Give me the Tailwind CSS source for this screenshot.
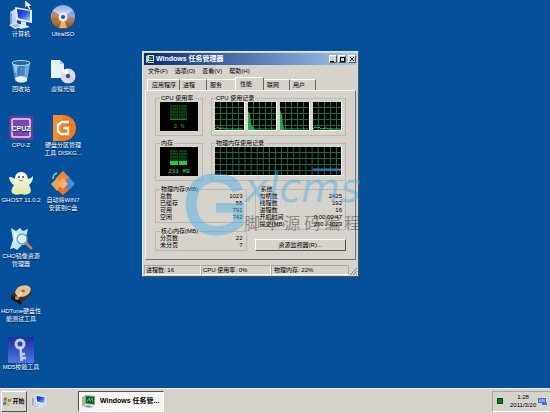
<!DOCTYPE html>
<html lang="zh-CN">
<head>
<meta charset="utf-8">
<title>Windows 任务管理器</title>
<script src="https://cdn.jsdelivr.net/npm/@tailwindcss/browser@4"></script>
</head>
<body class="h-screen flex flex-col overflow-hidden bg-[#04509b] font-['Liberation_Sans','Noto_Sans_CJK_SC',sans-serif] text-[6px] leading-[8px] text-black">

<svg class="absolute size-0" aria-hidden="true">
  <defs>
    <linearGradient id="screen" x1="0" y1="0" x2="1" y2="1"><stop offset="0" stop-color="#0b1fc0"/><stop offset=".5" stop-color="#2f55e8"/><stop offset="1" stop-color="#a9ccff"/></linearGradient>
    <linearGradient id="disc" x1="0" y1="0" x2="0" y2="1"><stop offset="0" stop-color="#8fa6de"/><stop offset=".45" stop-color="#dfe3f5"/><stop offset=".6" stop-color="#c9823c"/><stop offset="1" stop-color="#8a4a1c"/></linearGradient>
    <linearGradient id="bin" x1="0" y1="0" x2="1" y2="0"><stop offset="0" stop-color="#5f9fd0"/><stop offset=".5" stop-color="#2d6fae"/><stop offset="1" stop-color="#8cc4e6"/></linearGradient>
    <linearGradient id="key" x1="0" y1="0" x2="0" y2="1"><stop offset="0" stop-color="#1d2c9a"/><stop offset="1" stop-color="#4f78e6"/></linearGradient>
    <linearGradient id="ghost" x1="0" y1="0" x2="0" y2="1"><stop offset="0" stop-color="#ffffff"/><stop offset="1" stop-color="#dfe79a"/></linearGradient>
    <pattern id="grid" width="6" height="6" patternUnits="userSpaceOnUse"><path d="M5.500 0V6M0 5.500H6" stroke="#176b40" stroke-width="1" fill="none"/></pattern>
    <symbol id="pc" viewBox="0 0 26 26">
      <path d="M2 8l5-3 2 1v14l-5 2-2-2z" fill="#c3d3e8"/><path d="M2 8l2 1v13l-2-2z" fill="#7f9dc9"/>
      <path d="M7 3l17 3v13L8 16z" fill="#e6eefb"/><path d="M9 5l13 2v10L10 14z" fill="url(#screen)"/>
      <path d="M13 17l5 1v3l4 2-9 2-6-3 6-2z" fill="#d9e3f2"/><path d="M1 21l8-2 6 3-8 3z" fill="#eef4fd"/><path d="M3 21l6-1 4 2-6 2z" fill="#a8bddd"/>
    </symbol>
  </defs>
</svg>

<main class="relative flex-1 min-h-0">
  <nav aria-label="桌面" class="h-full w-[84px] grid grid-cols-2 grid-rows-7 grid-flow-col text-white text-center whitespace-nowrap [text-shadow:0_1px_1px_#00264f]">
    <a href="#" class="flex flex-col items-center pt-1"><svg class="size-[26px] shrink-0"><use href="#pc"/></svg>计算机</a>
    <a href="#" class="flex flex-col items-center pt-1">
      <svg class="size-[26px] shrink-0" viewBox="0 0 26 26"><path d="M4 4h18l-3 18q-6 4-12 0z" fill="url(#bin)"/><ellipse cx="13" cy="4" rx="9" ry="2.5" fill="#27659c" stroke="#b6dcf0"/><path d="M8 8l1 11M13 8v10M18 8l-1 11" stroke="#9fd0ec" stroke-opacity=".6"/><path d="M7 19q6-4 12 0v3q-6 3-11 0z" fill="#e5eef3"/><path d="M5 5l2 10 4-8z" fill="#cfe9f6" fill-opacity=".5"/></svg>回收站</a>
    <a href="#" class="flex flex-col items-center pt-1">
      <svg class="size-[26px] shrink-0" viewBox="0 0 26 26"><rect x="1" y="1" width="24" height="24" rx="2" fill="#69399f"/><rect x="4" y="4" width="18" height="18" rx="1" fill="#7a48ad" stroke="#e8dcf4" stroke-width="1.500"/><text x="13" y="16" text-anchor="middle" font-family="Liberation Sans" font-weight="bold" font-size="7" fill="#fff">CPUZ</text></svg>CPU-Z</a>
    <a href="#" class="flex flex-col items-center pt-1">
      <svg class="size-[26px] shrink-0" viewBox="0 0 26 26"><path d="M1 7q4 0 6 2 0-7 6-7t7 7q3 0 5-3 0 6-4 9 3 5 1 8-4 3-9 1-6 2-9-1-2-2 2-8-4-2-5-8z" fill="url(#ghost)"/><circle cx="11" cy="7" r="1" fill="#445"/><circle cx="15" cy="7" r="1" fill="#445"/><path d="M11 10q2 2 4 0" stroke="#778" fill="none"/></svg>GHOST 11.0.2</a>
    <a href="#" class="flex flex-col items-center pt-1">
      <svg class="size-[26px] shrink-0" viewBox="0 0 26 26"><path d="M3 2l5 3 4-3 3 3 5-2-2 8 2 7-6 1-5 5-3-2-4 1 3-9z" fill="#bfe9f5"/><path d="M6 6l4 2-3 9z" fill="#f2fcff"/><path d="M18 17l5 5" stroke="#b08365" stroke-width="3" stroke-linecap="round"/><circle cx="14" cy="13" r="5" fill="#d8f1fa" stroke="#6f9fb8" stroke-width="1.3"/></svg>CHO镜像资源<br>管理器</a>
    <a href="#" class="flex flex-col items-center pt-1">
      <svg class="size-[26px] shrink-0" viewBox="0 0 26 26"><path d="M3 14L14 4l10 4-1 5-11 11L3 18z" fill="#3a3230"/><path d="M3 14l10 6v4L3 18z" fill="#15161b"/><ellipse cx="15" cy="10" rx="8" ry="5.5" transform="rotate(-20 15 10)" fill="#e8c392"/><ellipse cx="15" cy="10" rx="2" ry="1.5" fill="#9a7347"/><path d="M9 18l5-7" stroke="#f4e6cf" stroke-width="1.5"/><circle cx="9" cy="17" r="2" fill="#b98d5d"/></svg>HDTune硬盘性<br>能测试工具</a>
    <a href="#" class="flex flex-col items-center pt-1">
      <svg class="size-[26px] shrink-0" viewBox="0 0 26 26"><rect width="26" height="26" fill="url(#key)"/><circle cx="12" cy="7" r="4" fill="none" stroke="#c4cffc" stroke-width="3"/><path d="M12.500 11l1 13M13 17h4M14 21h4" stroke="#c4cffc" stroke-width="2.500" fill="none"/></svg>MD5校验工具</a>
    <a href="#" class="flex flex-col items-center pt-1">
      <svg class="size-[26px] shrink-0" viewBox="0 0 26 26"><circle cx="13" cy="13" r="12" fill="url(#disc)"/><path d="M13 13L3 7A12 12 0 0 0 3 19z" fill="#a9642c" fill-opacity=".7"/><path d="M13 13l10-7a12 12 0 0 1 1 11z" fill="#6e7fc4" fill-opacity=".6"/><path d="M13 13l-4 11h8z" fill="#f3c795" fill-opacity=".8"/><circle cx="13" cy="13" r="4.500" fill="#e9ebf6"/><circle cx="13" cy="13" r="2" fill="#1557a0"/></svg>UltraISO</a>
    <a href="#" class="flex flex-col items-center pt-1">
      <svg class="size-[26px] shrink-0" viewBox="0 0 26 26"><path d="M1 1h9l4 4v14H1z" fill="#e4f3fd"/><path d="M10 1v4h4z" fill="#9cc6e6"/><circle cx="18" cy="17" r="7.500" fill="#d9dcee"/><path d="M18 17l-6-4a7 7 0 0 1 6-3z" fill="#fff"/><path d="M18 17l7 3a7 7 0 0 1-5 4z" fill="#e9c3dd"/><circle cx="18" cy="17" r="2.200" fill="#38517f"/></svg>虚拟光驱</a>
    <a href="#" class="flex flex-col items-center pt-1">
      <svg class="size-[26px] shrink-0" viewBox="0 0 26 26"><path d="M3 0h10a13 13 0 0 1 0 26H3z" fill="#f07a1c"/><path d="M3 0h10l-5 26H3z" fill="#f9983d" fill-opacity=".6"/><path d="M19 7h-7l-4 3v6l3 3h7v-6h-5" fill="none" stroke="#fff" stroke-width="2.300"/></svg>硬盘分区管理<br>工具 DISKG...</a>
    <a href="#" class="flex flex-col items-center pt-1">
      <svg class="size-[26px] shrink-0" viewBox="0 0 26 26"><path d="M13 1l7 7-7 6-7-6z" fill="#f08a35"/><path d="M7 8l6 6-6 7-6-7z" fill="#e9a25a"/><path d="M19 7l6 7-6 6-6-6z" fill="#3d8fd0"/><path d="M13 14l6 6-6 5-6-5z" fill="#ee6f2b"/><path d="M13 8l5 6-5 5-5-5z" fill="#f7b26a"/><path d="M3 9q0-5 4-6" stroke="#8bc6a0" stroke-width="1.500" fill="none"/></svg>自动将WIN7<br>安装到C盘</a>
  </nav>
  <svg class="absolute left-[25px] top-0 w-2 h-3" viewBox="0 0 8 12"><path d="M0 0v8l2-2 2 4 2-1-2-3h3z" fill="#fff" stroke="#222" stroke-width=".5"/></svg>

  <section aria-label="Windows 任务管理器" class="absolute left-[142px] top-[51px] w-[217px] bg-[#d6d2cc] border border-[#e9e6e0] border-r-[#55534f] border-b-[#55534f] p-px">
    <header class="h-3 flex items-center gap-px pl-px pr-px bg-linear-to-r from-[#0b2a70] to-[#a6caf0] text-white font-bold text-[7px]">
      <svg class="w-[10px] h-[10px]" viewBox="0 0 10 10"><path d="M1 2l2-1v7l-2 1z" fill="#ccc"/><path d="M3 1h6v6H3z" fill="#ddd"/><path d="M4 2h4v4H4z" fill="#0a4a20"/><path d="M4 5l1-2 1 2 2-2" stroke="#5f5" stroke-width=".6" fill="none"/><path d="M3 8h6v1H3z" fill="#eee"/></svg>
      <h1 class="flex-1">Windows 任务管理器</h1>
      <button aria-label="最小化" class="w-2 h-2 bg-[#d6d2cc] border border-white border-r-[#555] border-b-[#555] flex items-end"><span class="w-1 h-px bg-black"></span></button>
      <button aria-label="最大化" class="w-2 h-2 bg-[#d6d2cc] border border-white border-r-[#555] border-b-[#555] flex items-center justify-center"><span class="size-[5px] border border-black"></span></button>
      <button aria-label="关闭" class="w-2 h-2 ml-px bg-[#d6d2cc] border border-white border-r-[#555] border-b-[#555]"><svg viewBox="0 0 6 6"><path d="M1 1l4 4M5 1L1 5" stroke="#000"/></svg></button>
    </header>
    <nav aria-label="菜单" class="h-[12px] flex items-center gap-[7px] pl-1">
      <button>文件(F)</button><button>选项(O)</button><button>查看(V)</button><button>帮助(H)</button>
    </nav>
    <div role="tablist" class="flex items-end px-[3px] h-[13px]">
      <button role="tab" class="h-[11px] w-[33px] pl-1 text-left border-t border-l border-white border-r border-r-[#6b6965]">应用程序</button>
      <button role="tab" class="h-[11px] w-[27px] pl-[3px] text-left border-t border-t-white border-r border-r-[#6b6965]">进程</button>
      <button role="tab" class="h-[11px] w-[28px] pl-[3px] text-left border-t border-t-white">服务</button>
      <button role="tab" aria-selected="true" class="h-[13px] w-[29px] pl-1 text-left border-t border-l border-white border-r border-r-[#6b6965]">性能</button>
      <button role="tab" class="h-[11px] w-[26px] pl-[3px] text-left border-t border-t-white border-r border-r-[#6b6965]">联网</button>
      <button role="tab" class="h-[11px] w-[26px] pl-[3px] text-left border-t border-t-white border-r border-r-[#6b6965]">用户</button>
    </div>
    <div role="tabpanel" class="mx-px px-[9px] pt-[3px] pb-[8px] border border-[#f4f2ee] border-r-[#77746f] border-b-[#77746f]">
      <div class="grid grid-cols-[48px_1fr] gap-x-2 gap-y-[3px]">
        <fieldset class="border border-[#bdb9b2] px-1 pb-1 min-w-0"><legend class="px-px">CPU 使用率</legend>
          <svg class="block w-full h-[29px]" viewBox="0 0 38 29" preserveAspectRatio="none"><path d="M0 0h38v29H0z" fill="#000"/><path d="M10 3h8v15h-8zM19 3h8v15h-8z" fill="#07400f"/><path d="M10 5.500h17M10 8.500h17M10 11.500h17M10 14.500h17" stroke="#032006"/><path d="M10 17.500h17" stroke="#0c8a22"/><text x="19" y="26" text-anchor="middle" font-family="Liberation Mono" font-size="6" fill="#20b535">0 %</text></svg>
        </fieldset>
        <fieldset class="border border-[#bdb9b2] px-[3px] pb-1 min-w-0"><legend class="px-px">CPU 使用记录</legend>
          <div class="grid grid-cols-4 gap-[3px]">
            <svg class="block w-full h-[29px] border-r border-b border-white bg-black"><rect width="100%" height="100%" fill="url(#grid)"/><path d="M0 27l3-2 1 2 4-1 2 1 18 0" stroke="#2bd04a" fill="none"/></svg>
            <svg class="block w-full h-[29px] border-r border-b border-white bg-black"><rect width="100%" height="100%" fill="url(#grid)"/><path d="M0 28V9l2 3 1 10 2 3 2 3z" fill="#25a83c"/><path d="M5 27h23" stroke="#25a83c"/></svg>
            <svg class="block w-full h-[29px] border-r border-b border-white bg-black"><rect width="100%" height="100%" fill="url(#grid)"/><path d="M0 28V8l2 5 1 11 2 4z" fill="#25a83c"/><path d="M5 27h23" stroke="#25a83c"/></svg>
            <svg class="block w-full h-[29px] border-r border-b border-white bg-black"><rect width="100%" height="100%" fill="url(#grid)"/><path d="M0 27l2-2 2 1 2-1 2 2 5-1 3 1h12" stroke="#2bd04a" fill="none"/></svg>
          </div>
        </fieldset>
        <fieldset class="border border-[#bdb9b2] px-1 pb-1 min-w-0"><legend class="px-px">内存</legend>
          <svg class="block w-full h-[29px]" viewBox="0 0 38 29" preserveAspectRatio="none"><path d="M0 0h38v29H0z" fill="#000"/><path d="M10 3h8v11h-8zM19 3h8v11h-8z" fill="#07400f"/><path d="M10 5.500h17M10 8.500h17M10 11.500h17" stroke="#032006"/><path d="M10 14h8v4h-8zM19 14h8v4h-8z" fill="#1fc93a"/><text x="19" y="26" text-anchor="middle" font-family="Liberation Mono" font-weight="bold" font-size="6" fill="#20b535">231 MB</text></svg>
        </fieldset>
        <fieldset class="border border-[#bdb9b2] px-[3px] pb-1 min-w-0"><legend class="px-px">物理内存使用记录</legend>
          <svg class="block w-full h-[29px] border-r border-b border-white bg-black" viewBox="0 0 124 28" preserveAspectRatio="none"><rect width="124" height="28" fill="url(#grid)"/><path d="M96 22.500h28" stroke="#2d78d8" stroke-width="2"/></svg>
        </fieldset>
      </div>
      <div class="grid grid-cols-2 gap-2 mt-1">
        <div class="flex flex-col gap-1">
          <fieldset class="border border-[#bdb9b2] pl-1 pr-[3px] pb-px min-w-0"><legend class="px-px">物理内存(MB)</legend>
            <table class="w-full leading-[7px]"><tbody>
              <tr><th class="font-normal text-left p-0">总数</th><td class="text-right p-0">1023</td></tr>
              <tr><th class="font-normal text-left p-0">已缓存</th><td class="text-right p-0">55</td></tr>
              <tr><th class="font-normal text-left p-0">可用</th><td class="text-right p-0">791</td></tr>
              <tr><th class="font-normal text-left p-0">空闲</th><td class="text-right p-0">742</td></tr>
            </tbody></table>
          </fieldset>
          <fieldset class="border border-[#bdb9b2] pl-1 pr-[3px] pb-px min-w-0"><legend class="px-px">核心内存(MB)</legend>
            <table class="w-full leading-[7px]"><tbody>
              <tr><th class="font-normal text-left p-0">分页数</th><td class="text-right p-0">22</td></tr>
              <tr><th class="font-normal text-left p-0">未分页</th><td class="text-right p-0">7</td></tr>
            </tbody></table>
          </fieldset>
        </div>
        <div class="flex flex-col justify-between">
          <fieldset class="border border-[#bdb9b2] pl-1 pr-[3px] pb-px min-w-0"><legend class="px-px">系统</legend>
            <table class="w-full leading-[7px]"><tbody>
              <tr><th class="font-normal text-left p-0">句柄数</th><td class="text-right p-0">2425</td></tr>
              <tr><th class="font-normal text-left p-0">线程数</th><td class="text-right p-0">192</td></tr>
              <tr><th class="font-normal text-left p-0">进程数</th><td class="text-right p-0">16</td></tr>
              <tr><th class="font-normal text-left p-0">开机时间</th><td class="text-right p-0">0:00:00:47</td></tr>
              <tr><th class="font-normal text-left p-0">提交(MB)</th><td class="text-right p-0">200 / 1023</td></tr>
            </tbody></table>
          </fieldset>
          <button class="h-3 border border-white border-r-[#55534f] border-b-[#55534f]">资源监视器(R)...</button>
        </div>
      </div>
    </div>
    <footer class="mt-1 h-[11px] flex items-center">
      <span class="w-[57px] pl-px border border-[#aaa69f] border-r-white border-b-white">进程数: 16</span>
      <span class="w-[70px] pl-px border border-[#aaa69f] border-r-white border-b-white">CPU 使用率: 0%</span>
      <span class="flex-1 pl-[2px] border border-[#aaa69f] border-b-white">物理内存: 22%</span>
      <svg class="w-2 h-2 self-end" viewBox="0 0 8 8"><path d="M1 8l7-7M4 8l4-4M7 8l1-1" stroke="#8a8781"/></svg>
    </footer>
  </section>

  <div aria-hidden="true" class="pointer-events-none absolute left-[183px] top-[161px] flex items-start text-[#45b0ee] opacity-45">
    <span class="text-[84px] leading-[86px] [-webkit-text-stroke:3px_#45b0ee]">G</span>
    <div class="-ml-1">
      <div class="font-['DejaVu_Sans'] italic text-[40px] leading-[54px]">xlcms</div>
      <div class="w-[116px] flex justify-between text-[16px] leading-[18px] text-[#333]"><span>脚</span><span>本</span><span>源</span><span>码</span><span>编</span><span>程</span></div>
    </div>
  </div>
</main>

<footer class="h-[25px] shrink-0 flex items-center bg-[#d6d2cc] border-t border-[#f2f0ec] pl-px">
  <button class="w-[26px] h-[21px] flex items-center justify-center font-bold border border-white border-r-[#55534f] border-b-[#55534f]">
    <svg class="w-[9px] h-[9px]" viewBox="0 0 9 9"><path d="M1 1q2-1 3 0L3.500 4q-1-1-3 0z" fill="#e2502a"/><path d="M5 1.500q2 1 3.500 0L8 4.500q-2 1-3.500 0z" fill="#5fae3a"/><path d="M.5 5q2-1 3 0L3 8Q2 7 0 8z" fill="#3c76d6"/><path d="M4 5.500q2 1 3.500 0L7 8.500q-2 1-3.500 0z" fill="#f1bd2e"/></svg>开始</button>
  <button aria-label="计算机" class="ml-1"><svg class="w-[16px] h-[16px]"><use href="#pc"/></svg></button>
  <button class="ml-[31px] w-[86px] h-[21px] flex items-center gap-1 pl-[2px] bg-[#f6f5f2] border border-[#55534f] border-r-white border-b-white font-bold text-[7px] whitespace-nowrap">
    <svg class="w-[15px] h-[15px]" viewBox="0 0 15 15"><path d="M1 3l3-1v9l-3 1z" fill="#a6b2ad"/><path d="M4 1l10 1v9L4 10z" fill="#8a9c93"/><path d="M5 2.500l8 .5v7L5 9z" fill="#0f5a26"/><path d="M6 8l2-4 1 3 2-3 1 4" stroke="#3fc95c" fill="none"/><path d="M2 12l5-1 6 2-6 1z" fill="#9aa7a1"/></svg>Windows 任务管...</button>
  <div class="ml-auto w-[58px] h-[21px] flex items-center pl-1 border border-[#aaa69f] border-b-white border-r-0">
    <span class="size-[6px] bg-[#0a7a1c] border border-[#0b4013]"></span>
    <div class="ml-[7px] text-center leading-[8px]">1:28<br>2011/3/20</div>
    <svg class="ml-[2px] w-[9px] h-[8px]" viewBox="0 0 9 8"><path d="M0 1h8v5H0z" fill="#3f74c9"/><path d="M1 2h6v3H1z" fill="#78a7ee"/><path d="M4 6h5v2H4z" fill="#4c6fae"/></svg>
  </div>
</footer>
</body>
</html>
